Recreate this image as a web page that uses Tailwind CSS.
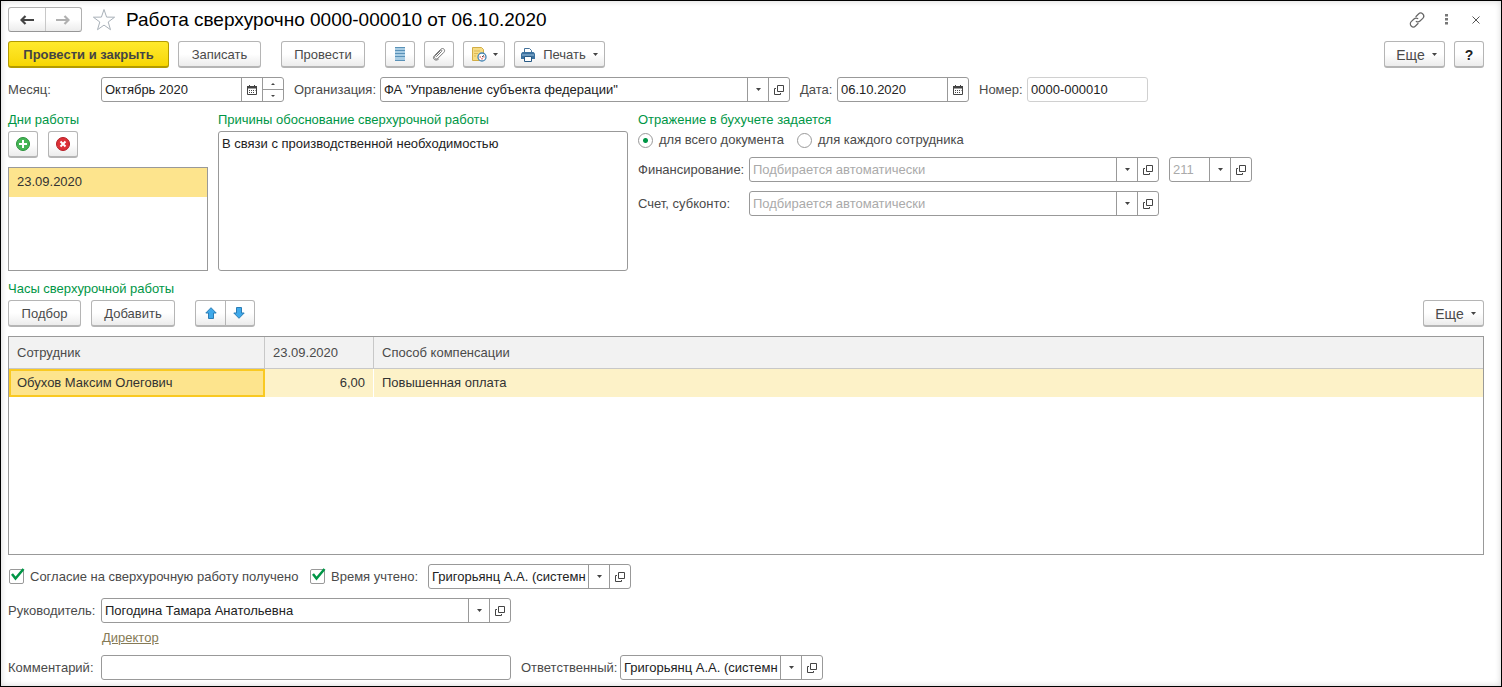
<!DOCTYPE html>
<html lang="ru">
<head>
<meta charset="utf-8">
<title>Работа сверхурочно 0000-000010 от 06.10.2020</title>
<meta name="viewport" content="width=device-width, initial-scale=1">
<script src="https://cdn.jsdelivr.net/npm/@tailwindcss/browser@4"></script>
</head>
<body class="bg-white font-['Liberation_Sans',Arial,sans-serif] text-[13px] leading-4 text-[#4a4a4a]">
<svg class="hidden" aria-hidden="true">
  <symbol id="caret" viewBox="0 0 5 3"><path d="M0 0h5L2.500 3z" fill="#444"/></symbol>
  <symbol id="open" viewBox="0 0 10 10"><path d="M3.500.500h6v6h-6zM2 3.500H.5v6h6V8" fill="none" stroke="#444"/></symbol>
  <symbol id="calendar" viewBox="0 0 10 10"><path d="M.5 1.500h9v8h-9z" fill="#fff" stroke="#444"/><path d="M0 1h10v2.500H0zM2 0h1v1H2zM7 0h1v1H7z" fill="#444"/><path d="M2 5h1v1H2zM4 5h1v1H4zM6 5h1v1H6zM8 5h.5v1H8zM2 7h1v1H2zM4 7h1v1H4zM6 7h1v1H6z" fill="#444"/></symbol>
</svg>
<main class="flex min-h-screen flex-col border border-black pt-[6px] pr-[17px] pb-[6px] pl-[7px] shadow-[inset_0_0_6px_#d4d4d4]">

  <header class="flex h-[25px] items-center">
    <div class="flex h-[25px] w-[74px] rounded-[3px] border border-[#b0b0b0] border-b-[#969696] bg-linear-to-b from-white from-50% to-[#ececec]">
      <button aria-label="Назад" class="flex flex-1 items-center justify-center border-r border-[#c8c8c8]"><svg class="h-[10px] w-[14px]" viewBox="0 0 14 10"><path d="M1.500 5H14M5.500 1 1.500 5l4 4" fill="none" stroke="#444" stroke-width="2.200"/></svg></button>
      <button aria-label="Вперед" class="flex flex-1 items-center justify-center"><svg class="h-[10px] w-[14px]" viewBox="0 0 14 10"><path d="M0 5h12.500M8.500 1l4 4-4 4" fill="none" stroke="#b0b0b0" stroke-width="2.200"/></svg></button>
    </div>
    <button aria-label="В избранное" class="ml-[10px]"><svg class="h-6 w-6" viewBox="0 0 24 24"><path d="m12 1.500 2.600 7.600 8 .1-6.400 4.800 2.300 7.700L12 17.100l-6.500 4.600L7.800 14 1.400 9.200l8-.1z" fill="#fff" stroke="#a9b1b9"/></svg></button>
    <h1 class="ml-[10px] text-[19px] leading-6 text-black">Работа сверхурочно 0000-000010 от 06.10.2020</h1>
    <div class="ml-auto flex items-center">
      <button aria-label="Ссылка"><svg class="h-4 w-4" viewBox="0 0 16 16"><g fill="none" stroke="#666" stroke-width="1.200" stroke-linecap="round"><path d="M7 4.500 9.500 2a3 3 0 0 1 4.300 4.300L11 9a3 3 0 0 1-3.700.4M9 11.500 6.500 14a3 3 0 0 1-4.300-4.300L5 7a3 3 0 0 1 3.700-.4"/></g></svg></button>
      <button aria-label="Меню" class="ml-5"><svg class="h-[11px] w-[3px]" viewBox="0 0 3 11"><path d="M0 0h3v2.500H0zM0 4h3v2.500H0zM0 8h3v2.500H0z" fill="#777"/></svg></button>
      <button aria-label="Закрыть" class="mr-1 ml-6"><svg class="h-2 w-2" viewBox="0 0 8 8"><path d="m.5.500 7 7m0-7-7 7" stroke="#555"/></svg></button>
    </div>
  </header>

  <div class="mt-[9px] flex h-[27px]">
    <button class="w-[161px] rounded-[3px] border border-b-2 border-[#b39b00] bg-linear-to-b from-[#ffea2b] to-[#f7d600] pt-px font-bold text-[#444]">Провести и закрыть</button>
    <button class="ml-[9px] w-[83px] rounded-[3px] border border-b-2 border-[#b5b5b5] bg-linear-to-b from-white from-50% to-[#ececec] pt-px">Записать</button>
    <button class="ml-5 w-[84px] rounded-[3px] border border-b-2 border-[#b5b5b5] bg-linear-to-b from-white from-50% to-[#ececec] pt-px">Провести</button>
    <button aria-label="Список" class="ml-5 flex w-[30px] items-center justify-center rounded-[3px] border border-b-2 border-[#b5b5b5] bg-linear-to-b from-white from-50% to-[#ececec]"><svg class="h-[14px] w-[10px]" viewBox="0 0 10 14"><path d="M0 0h10v14H0z" fill="#a9cde4"/><path d="M0 .5h10M0 3.500h10M0 6.500h10M0 9.500h10M0 13.500h10" stroke="#5a92b8"/></svg></button>
    <button aria-label="Присоединенные файлы" class="ml-[9px] flex w-[30px] items-center justify-center rounded-[3px] border border-b-2 border-[#b5b5b5] bg-linear-to-b from-white from-50% to-[#ececec]"><svg class="h-[14px] w-[14px]" viewBox="0 0 14 14"><path d="m4.500 9.500 5-5c1-1 0-2-1-1L3.200 8.800c-2 2 .7 4.500 2.600 2.600l6-6c2.300-2.400-.8-5.400-3.200-3L2.500 8.500c-3 3 1 6.500 4 3.700" fill="none" stroke="#777" stroke-linecap="round"/></svg></button>
    <button aria-label="Отложенные" class="ml-[9px] flex w-[42px] items-center justify-center gap-[6px] rounded-[3px] border border-b-2 border-[#b5b5b5] bg-linear-to-b from-white from-50% to-[#ececec]"><svg class="h-4 w-4" viewBox="0 0 16 16"><path d="M1.500 1.500h9l2 2v11h-11z" fill="#f6dc84" stroke="#d2ad45"/><path d="M3 5h6M3 7.500h4M3 10h2" stroke="#dcb955"/><circle cx="11" cy="11" r="4" fill="#fff" stroke="#4585b5" stroke-width="1.300"/><path d="M11 11 13 9.500" stroke="#333"/><path d="M8.500 11H10M12.500 11h1M11 13.500V12" stroke="#d33"/></svg><svg class="h-[3px] w-[5px]"><use href="#caret"/></svg></button>
    <button class="ml-[9px] flex w-[91px] items-center justify-center rounded-[3px] border border-b-2 border-[#b5b5b5] bg-linear-to-b from-white from-50% to-[#ececec] pt-px"><svg class="mr-2 h-[14px] w-[14px]" viewBox="0 0 14 14"><path d="M3.500 4V.500h5l2 2V4" fill="#fff" stroke="#44729b"/><path d="M1.500 4h11L14 5.500V11H0V5.500z" fill="#3b719f"/><path d="M1 7h12" stroke="#9fc2dd"/><path d="M3.500 8.500h7v5h-7z" fill="#fff" stroke="#285a85"/></svg>Печать<svg class="ml-[7px] h-[3px] w-[5px]"><use href="#caret"/></svg></button>
    <button class="ml-auto flex w-[61px] items-center justify-center rounded-[3px] border border-b-2 border-[#b5b5b5] bg-linear-to-b from-white from-50% to-[#ececec] pt-px pl-1 text-[14px]">Еще<svg class="ml-[7px] h-[3px] w-[5px]"><use href="#caret"/></svg></button>
    <button aria-label="Справка" class="ml-[9px] w-[30px] rounded-[3px] border border-b-2 border-[#b5b5b5] bg-linear-to-b from-white from-50% to-[#ececec] pt-px text-[14px] font-bold text-[#222]">?</button>
  </div>

  <div class="mt-[9px] flex h-[25px] items-center whitespace-nowrap">
    <label for="month" class="w-[93px]">Месяц:</label>
    <div class="flex h-[25px] w-[183px] rounded-[3px] border border-[#999]">
      <input id="month" value="Октябрь 2020" class="min-w-0 flex-1 pl-[3px] text-[#222] outline-none">
      <button aria-label="Выбрать месяц" class="flex w-[21px] items-center justify-center border-l border-[#999]"><svg class="h-[10px] w-[10px]"><use href="#calendar"/></svg></button>
      <div class="flex w-[21px] flex-col border-l border-[#999]">
        <button aria-label="Следующий месяц" class="flex flex-1 items-center justify-center border-b border-[#999]"><svg class="h-[2px] w-[4px] rotate-180" viewBox="0 0 4 2"><path d="M0 0h4L2 2z" fill="#444"/></svg></button>
        <button aria-label="Предыдущий месяц" class="flex flex-1 items-center justify-center"><svg class="h-[2px] w-[4px]" viewBox="0 0 4 2"><path d="M0 0h4L2 2z" fill="#444"/></svg></button>
      </div>
    </div>
    <label for="org" class="ml-[10px] w-[86px]">Организация:</label>
    <div class="flex h-[25px] w-[410px] rounded-[3px] border border-[#999]">
      <input id="org" value='ФА "Управление субъекта федерации"' class="min-w-0 flex-1 pl-[3px] text-[#222] outline-none">
      <button aria-label="Выбрать" class="flex w-[21px] items-center justify-center border-l border-[#999]"><svg class="h-[3px] w-[5px]"><use href="#caret"/></svg></button>
      <button aria-label="Открыть" class="flex w-[21px] items-center justify-center border-l border-[#999]"><svg class="h-[10px] w-[10px]"><use href="#open"/></svg></button>
    </div>
    <label for="date" class="ml-[10px] w-[37px]">Дата:</label>
    <div class="flex h-[25px] w-[132px] rounded-[3px] border border-[#999]">
      <input id="date" value="06.10.2020" class="min-w-0 flex-1 pl-[3px] text-[#222] outline-none">
      <button aria-label="Выбрать дату" class="flex w-[21px] items-center justify-center border-l border-[#999]"><svg class="h-[10px] w-[10px]"><use href="#calendar"/></svg></button>
    </div>
    <label for="number" class="ml-[10px] w-12">Номер:</label>
    <input id="number" value="0000-000010" class="h-[25px] w-[121px] rounded-[3px] border border-[#d0d0d0] pl-[3px] text-[#222] outline-none">
  </div>

  <div class="mt-[10px] flex h-[159px] gap-[10px] whitespace-nowrap">
    <section class="flex w-[200px] flex-col">
      <h2 class="text-[#009646]">Дни работы</h2>
      <div class="mt-[3px] flex h-[27px] gap-[10px]">
        <button aria-label="Добавить день" class="flex w-[30px] items-center justify-center rounded-[3px] border border-b-2 border-[#b5b5b5] bg-linear-to-b from-white from-50% to-[#ececec]"><svg class="h-[14px] w-[14px]" viewBox="0 0 14 14"><circle cx="7" cy="7" r="6.500" fill="#45b555" stroke="#2b913b"/><path d="M7 3v8M3 7h8" stroke="#fff" stroke-width="2"/></svg></button>
        <button aria-label="Удалить день" class="flex w-[30px] items-center justify-center rounded-[3px] border border-b-2 border-[#b5b5b5] bg-linear-to-b from-white from-50% to-[#ececec]"><svg class="h-[14px] w-[14px]" viewBox="0 0 14 14"><circle cx="7" cy="7" r="6.500" fill="#dc3137" stroke="#b41d25"/><path d="m4.500 4.500 5 5m0-5-5 5" stroke="#fff" stroke-width="2"/></svg></button>
      </div>
      <ul class="mt-[9px] flex-1 border border-[#999]"><li class="bg-[#fde48d] px-2 pt-[6px] pb-[7px] text-[#333]">23.09.2020</li></ul>
    </section>
    <section class="flex w-[410px] flex-col">
      <label for="reason" class="text-[#009646]">Причины обоснование сверхурочной работы</label>
      <textarea id="reason" class="mt-[3px] flex-1 resize-none rounded-[3px] border border-[#999] px-[3px] py-1 text-[#222] outline-none">В связи с производственной необходимостью</textarea>
    </section>
    <section>
      <h2 class="text-[#009646]">Отражение в бухучете задается</h2>
      <div class="mt-1 flex h-4 items-center">
        <input type="radio" name="scope" id="all" checked class="h-[15px] w-[15px] appearance-none rounded-full border border-[#999] bg-white checked:bg-[radial-gradient(circle,#009646_0_2px,white_3px)]"><label for="all" class="ml-[6px] w-[138px]">для всего документа</label>
        <input type="radio" name="scope" id="each" class="h-[15px] w-[15px] appearance-none rounded-full border border-[#999] bg-white checked:bg-[radial-gradient(circle,#009646_0_2px,white_3px)]"><label for="each" class="ml-[6px]">для каждого сотрудника</label>
      </div>
      <div class="mt-[9px] flex h-[25px] items-center">
        <label for="fin" class="w-[111px]">Финансирование:</label>
        <div class="flex h-[25px] w-[410px] rounded-[3px] border border-[#999]">
          <input id="fin" placeholder="Подбирается автоматически" class="min-w-0 flex-1 pl-[3px] outline-none placeholder:text-[#aaa]">
          <button aria-label="Выбрать" class="flex w-[21px] items-center justify-center border-l border-[#999]"><svg class="h-[3px] w-[5px]"><use href="#caret"/></svg></button>
          <button aria-label="Открыть" class="flex w-[21px] items-center justify-center border-l border-[#999]"><svg class="h-[10px] w-[10px]"><use href="#open"/></svg></button>
        </div>
        <div class="ml-[10px] flex h-[25px] w-[83px] rounded-[3px] border border-[#999]">
          <input aria-label="КОСГУ" placeholder="211" class="min-w-0 flex-1 pl-[3px] outline-none placeholder:text-[#aaa]">
          <button aria-label="Выбрать" class="flex w-[21px] items-center justify-center border-l border-[#999]"><svg class="h-[3px] w-[5px]"><use href="#caret"/></svg></button>
          <button aria-label="Открыть" class="flex w-[21px] items-center justify-center border-l border-[#999]"><svg class="h-[10px] w-[10px]"><use href="#open"/></svg></button>
        </div>
      </div>
      <div class="mt-[9px] flex h-[25px] items-center">
        <label for="acc" class="w-[111px]">Счет, субконто:</label>
        <div class="flex h-[25px] w-[410px] rounded-[3px] border border-[#999]">
          <input id="acc" placeholder="Подбирается автоматически" class="min-w-0 flex-1 pl-[3px] outline-none placeholder:text-[#aaa]">
          <button aria-label="Выбрать" class="flex w-[21px] items-center justify-center border-l border-[#999]"><svg class="h-[3px] w-[5px]"><use href="#caret"/></svg></button>
          <button aria-label="Открыть" class="flex w-[21px] items-center justify-center border-l border-[#999]"><svg class="h-[10px] w-[10px]"><use href="#open"/></svg></button>
        </div>
      </div>
    </section>
  </div>

  <h2 class="mt-[10px] text-[#009646]">Часы сверхурочной работы</h2>
  <div class="mt-[3px] flex h-[27px]">
    <button class="w-[73px] rounded-[3px] border border-b-2 border-[#b5b5b5] bg-linear-to-b from-white from-50% to-[#ececec] pt-px">Подбор</button>
    <button class="ml-[10px] w-[84px] rounded-[3px] border border-b-2 border-[#b5b5b5] bg-linear-to-b from-white from-50% to-[#ececec] pt-px">Добавить</button>
    <div class="ml-5 flex w-[60px] rounded-[3px] border border-b-2 border-[#b5b5b5] bg-linear-to-b from-white from-50% to-[#ececec]">
      <button aria-label="Вверх" class="flex w-[30px] items-center justify-center border-r border-[#b5b5b5]"><svg class="h-3 w-3" viewBox="0 0 12 12"><path d="m6 .700 5.200 5.300H8.500v5.500h-5V6H.8z" fill="#3fa9ea" stroke="#2b7db5"/></svg></button>
      <button aria-label="Вниз" class="flex w-[26px] items-center justify-center"><svg class="h-3 w-3 rotate-180" viewBox="0 0 12 12"><path d="m6 .700 5.200 5.300H8.500v5.500h-5V6H.8z" fill="#3fa9ea" stroke="#2b7db5"/></svg></button>
    </div>
    <button class="ml-auto flex w-[61px] items-center justify-center rounded-[3px] border border-b-2 border-[#b5b5b5] bg-linear-to-b from-white from-50% to-[#ececec] pt-px pl-1 text-[14px]">Еще<svg class="ml-[7px] h-[3px] w-[5px]"><use href="#caret"/></svg></button>
  </div>

  <div class="mt-[9px] flex-1 border border-[#999]">
    <table class="w-full table-fixed border-separate border-spacing-0 text-left">
      <colgroup><col class="w-[256px]"><col class="w-[109px]"><col></colgroup>
      <thead><tr class="h-8 bg-[#f2f2f2]">
        <th class="border-r border-b border-[#c8c8c8] px-2 font-normal">Сотрудник</th>
        <th class="border-r border-b border-[#c8c8c8] px-2 font-normal">23.09.2020</th>
        <th class="border-b border-[#c8c8c8] px-2 font-normal">Способ компенсации</th>
      </tr></thead>
      <tbody><tr class="h-7 bg-[#fdf2c8] text-[#333]">
        <td class="border-2 border-[#f9c922] bg-[#fde48d] px-[6px]">Обухов Максим Олегович</td>
        <td class="border-r border-white px-2 text-right">6,00</td>
        <td class="px-2">Повышенная оплата</td>
      </tr></tbody>
    </table>
  </div>

  <div class="mt-[9px] flex h-[25px] items-center whitespace-nowrap">
    <span class="relative ml-px flex h-[15px] w-[15px]"><input type="checkbox" id="consent" checked class="peer h-[15px] w-[15px] appearance-none rounded-[2px] border border-[#999]"><svg class="pointer-events-none absolute -top-px left-px hidden h-[14px] w-[15px] peer-checked:block" viewBox="0 0 15 14"><path d="m2 6 3.500 4.500L13.500 1" fill="none" stroke="#009646" stroke-width="2.500"/></svg></span>
    <label for="consent" class="ml-[6px] w-[280px]">Согласие на сверхурочную работу получено</label>
    <span class="relative flex h-[15px] w-[15px]"><input type="checkbox" id="counted" checked class="peer h-[15px] w-[15px] appearance-none rounded-[2px] border border-[#999]"><svg class="pointer-events-none absolute -top-px left-px hidden h-[14px] w-[15px] peer-checked:block" viewBox="0 0 15 14"><path d="m2 6 3.500 4.500L13.500 1" fill="none" stroke="#009646" stroke-width="2.500"/></svg></span>
    <label for="counted" class="ml-[6px] w-[97px]">Время учтено:</label>
    <div class="flex h-[25px] w-[203px] rounded-[3px] border border-[#999]">
      <input aria-label="Кем учтено" value="Григорьянц А.А. (системн" class="min-w-0 flex-1 pl-[3px] text-[#222] outline-none">
      <button aria-label="Выбрать" class="flex w-[21px] items-center justify-center border-l border-[#999]"><svg class="h-[3px] w-[5px]"><use href="#caret"/></svg></button>
      <button aria-label="Открыть" class="flex w-[21px] items-center justify-center border-l border-[#999]"><svg class="h-[10px] w-[10px]"><use href="#open"/></svg></button>
    </div>
  </div>
  <div class="mt-[9px] flex h-[25px] items-center whitespace-nowrap">
    <label for="head" class="w-[93px]">Руководитель:</label>
    <div class="flex h-[25px] w-[410px] rounded-[3px] border border-[#999]">
      <input id="head" value="Погодина Тамара Анатольевна" class="min-w-0 flex-1 pl-[3px] text-[#222] outline-none">
      <button aria-label="Выбрать" class="flex w-[21px] items-center justify-center border-l border-[#999]"><svg class="h-[3px] w-[5px]"><use href="#caret"/></svg></button>
      <button aria-label="Открыть" class="flex w-[21px] items-center justify-center border-l border-[#999]"><svg class="h-[10px] w-[10px]"><use href="#open"/></svg></button>
    </div>
  </div>
  <div class="mt-[7px] flex pl-[94px]"><a href="#" class="text-[#857a55] underline">Директор</a></div>
  <div class="mt-[9px] flex h-[25px] items-center whitespace-nowrap">
    <label for="comment" class="w-[93px]">Комментарий:</label>
    <input id="comment" class="h-[25px] w-[410px] rounded-[3px] border border-[#999] pl-[3px] text-[#222] outline-none">
    <label for="resp" class="ml-[10px] w-[99px]">Ответственный:</label>
    <div class="flex h-[25px] w-[203px] rounded-[3px] border border-[#999]">
      <input id="resp" value="Григорьянц А.А. (системн" class="min-w-0 flex-1 pl-[3px] text-[#222] outline-none">
      <button aria-label="Выбрать" class="flex w-[21px] items-center justify-center border-l border-[#999]"><svg class="h-[3px] w-[5px]"><use href="#caret"/></svg></button>
      <button aria-label="Открыть" class="flex w-[21px] items-center justify-center border-l border-[#999]"><svg class="h-[10px] w-[10px]"><use href="#open"/></svg></button>
    </div>
  </div>
</main>
</body>
</html>
